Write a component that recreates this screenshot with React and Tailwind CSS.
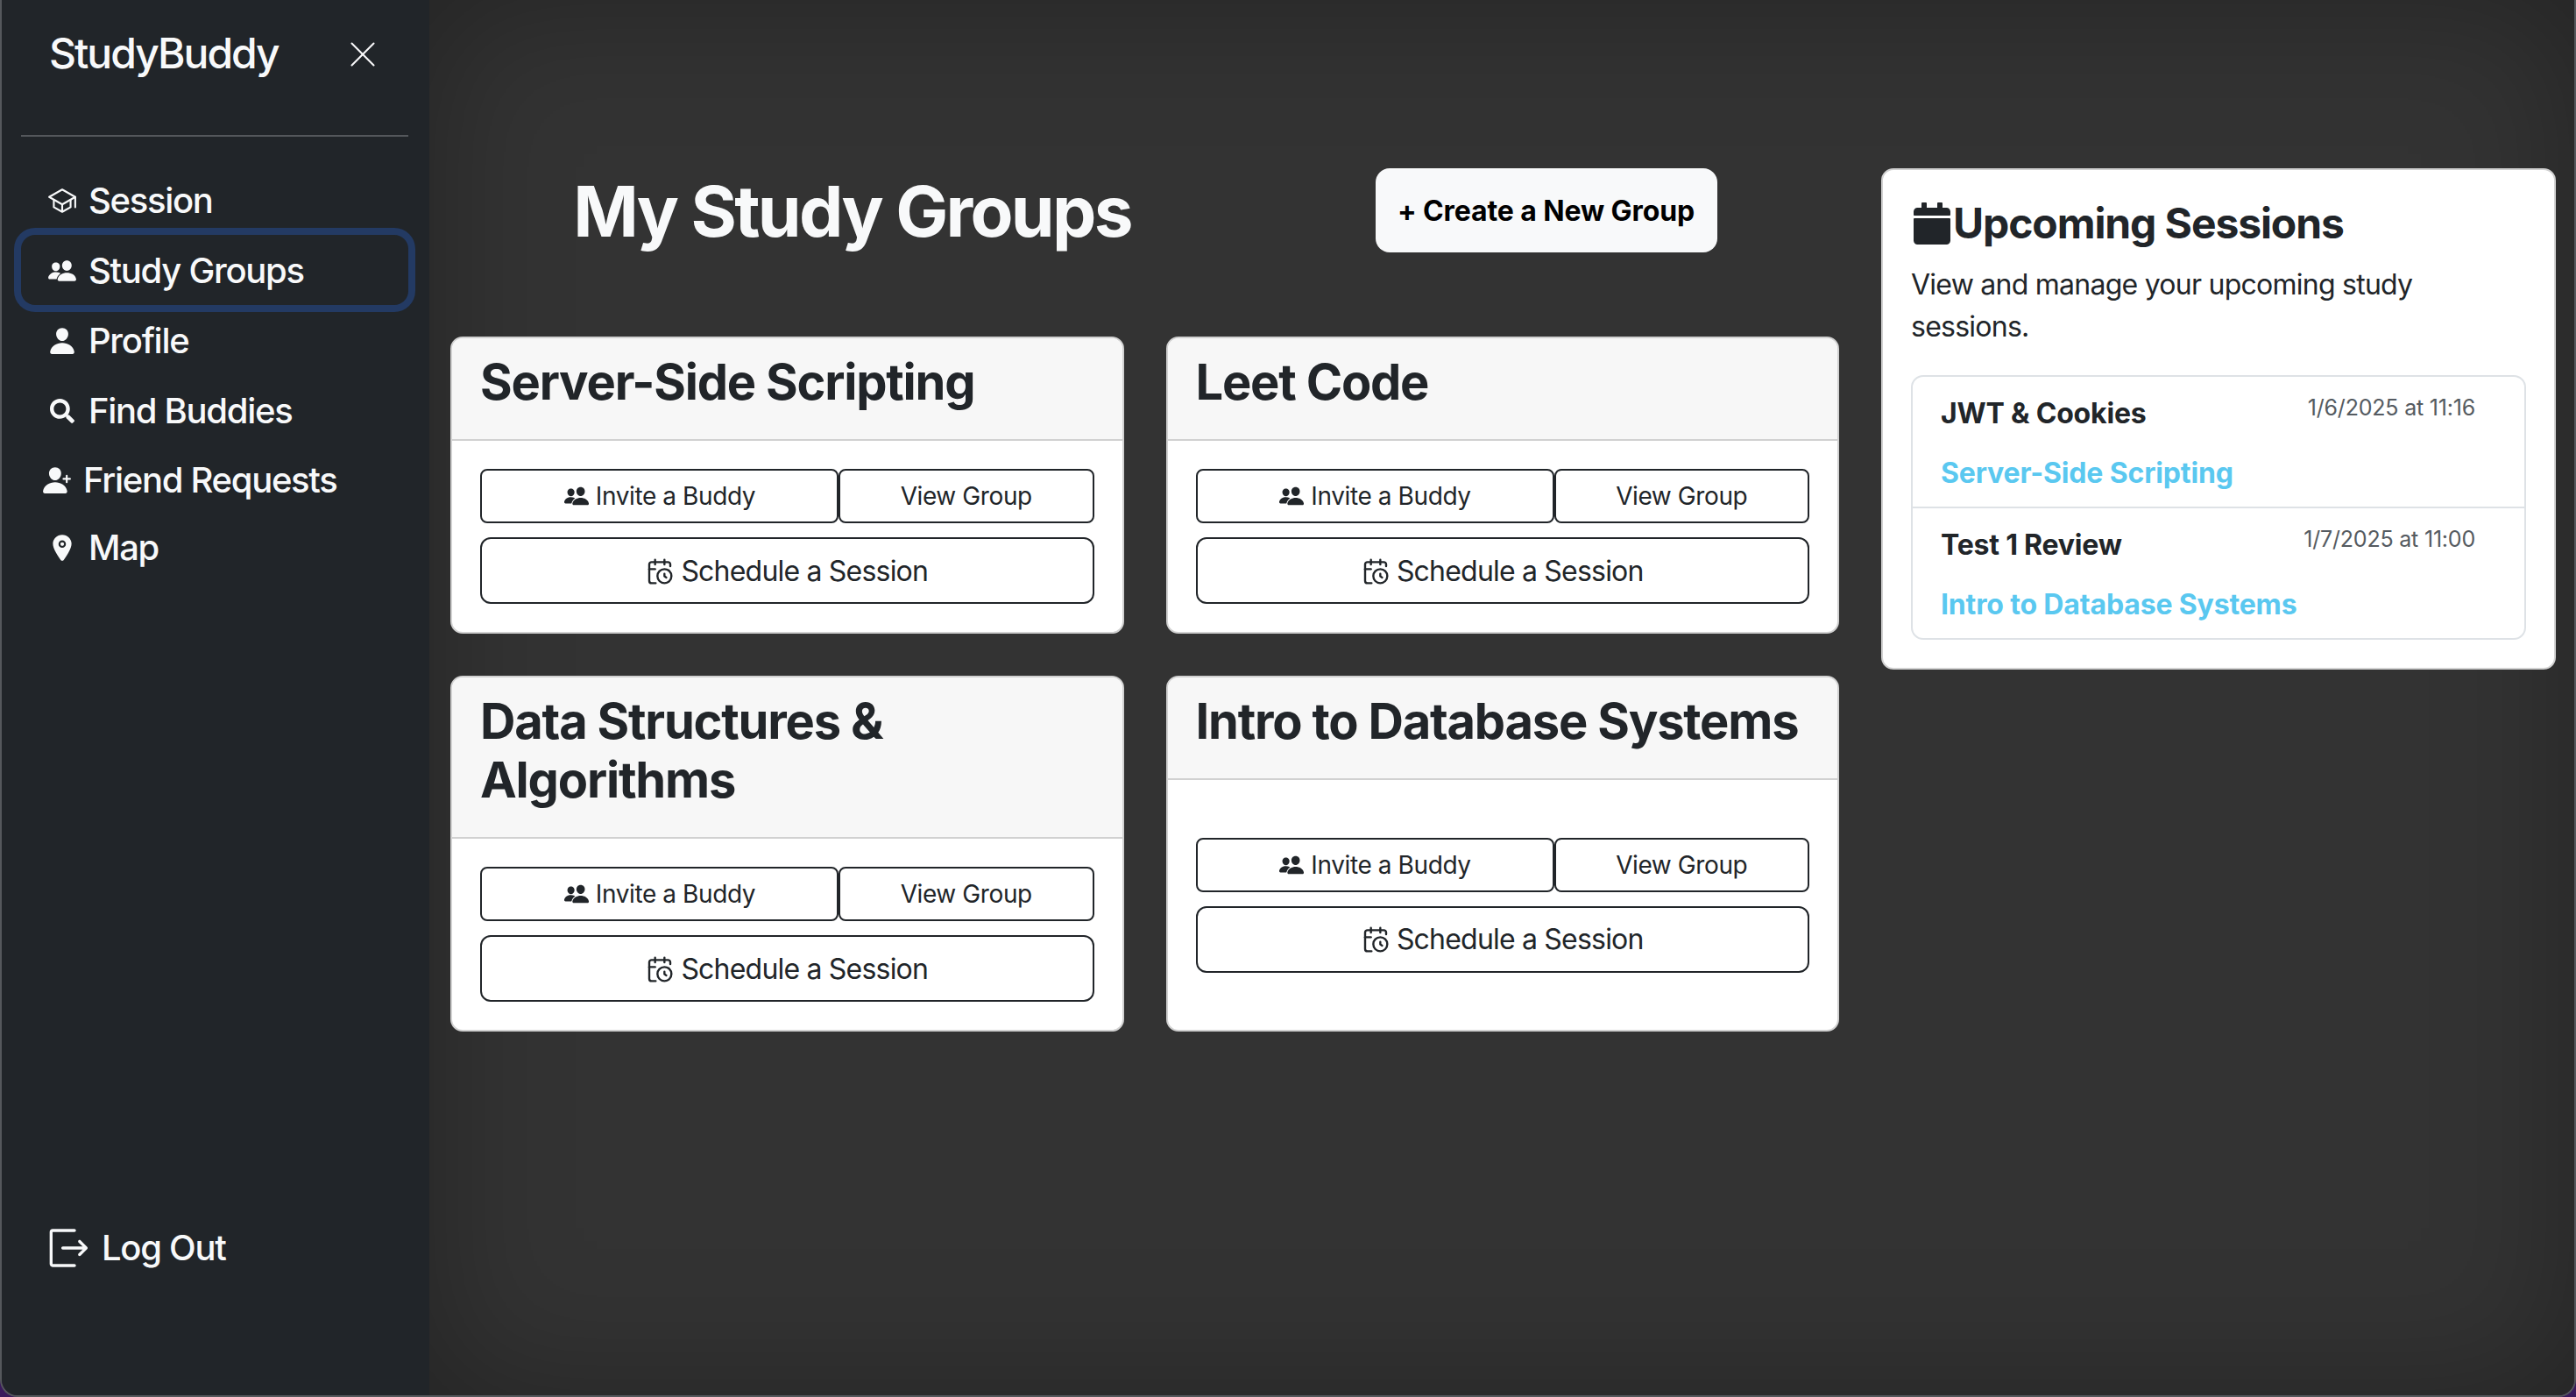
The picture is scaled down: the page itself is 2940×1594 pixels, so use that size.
import { X, CalendarClock } from 'lucide-react'
import { IoSchoolOutline, IoPeople, IoPerson, IoPersonAdd, IoLocation } from 'react-icons/io5'
import { FaCalendar, FaSearch } from 'react-icons/fa'
import { RxExit } from 'react-icons/rx'

const navItems = [
  { label: 'Session', icon: IoSchoolOutline, size: 34, box: 'h-20 pl-[30px] pt-[1px]' },
  { label: 'Study Groups', icon: IoPeople, size: 34, box: 'h-20 pl-[30px] pt-[1px] rounded-2xl ring-8 ring-[#233a63]' },
  { label: 'Profile', icon: IoPerson, size: 34, box: 'h-20 pl-[30px] pt-[1px]' },
  { label: 'Find Buddies', icon: FaSearch, size: 28, box: 'h-20 pl-[30px] pt-[1px]' },
  { label: 'Friend Requests', icon: IoPersonAdd, size: 34, iconClass: '-scale-x-100', box: 'h-[78px] pl-[24px] pt-[1px]' },
  { label: 'Map', icon: IoLocation, size: 34, box: 'h-[78px] pl-[30px]' },
]

const groups = [
  { name: 'Server-Side Scripting' },
  { name: 'Leet Code' },
  { name: 'Data Structures & Algorithms' },
  { name: 'Intro to Database Systems' },
]

const sessions = [
  { title: 'JWT & Cookies', date: '1/6/2025 at 11:16', group: 'Server-Side Scripting' },
  { title: 'Test 1 Review', date: '1/7/2025 at 11:00', group: 'Intro to Database Systems' },
]

function GroupCard({ name }) {
  return (
    <div className="flex flex-col bg-white border-2 border-[#d1d1d1] rounded-[14px] overflow-hidden text-[#212529]">
      <div className="bg-[#f7f7f7] border-b-2 border-[#d1d1d1] px-8 pt-[17px] pb-[31px]">
        <h3 className="text-[56px] leading-[67px] font-[650] tracking-[-1.2px]">{name}</h3>
      </div>
      <div className="flex-1 flex flex-col justify-center gap-4 p-8">
        <div className="flex">
          <button className="w-[409px] h-[62px] flex items-center justify-center gap-[7px] border-2 border-[#212529] rounded-lg text-[28px] tracking-[-0.4px]">
            <IoPeople size={30} />
            Invite a Buddy
          </button>
          <button className="flex-1 h-[62px] border-2 border-[#212529] rounded-lg text-[28px] tracking-[-0.4px]">
            View Group
          </button>
        </div>
        <button className="h-[76px] pt-[1px] flex items-center justify-center gap-2 border-2 border-[#212529] rounded-xl text-[32px] tracking-[-0.8px]">
          <CalendarClock size={32} strokeWidth={1.8} />
          Schedule a Session
        </button>
      </div>
    </div>
  )
}

export default function App() {
  return (
    <div className="min-h-[1594px] bg-[#3a1a5c] [font-family:Inter,sans-serif]">
      <div className="h-[1594px] flex overflow-hidden border-2 border-t-0 border-[#55585c] rounded-b-[20px]">

        {/* Sidebar */}
        <aside className="w-[488px] shrink-0 flex flex-col bg-[#212529] text-[#f8f9fa]">
          <div className="h-[154px] flex items-start pl-[54px] pt-[31px]">
            <span className="w-[333px] text-[48px] leading-[60px] font-[550] tracking-[-2px]">StudyBuddy</span>
            <X size={50} strokeWidth={1} className="mt-[6px]" />
          </div>
          <div className="ml-[22px] mr-[24px] h-[2px] bg-[#54575b]" />

          <nav className="ml-[22px] mr-[24px] mt-8 flex flex-col">
            {navItems.map(item => (
              <div key={item.label} className={`flex items-center gap-[13px] text-[40px] font-[550] tracking-[-1.3px] ${item.box}`}>
                <span className="w-[34px] flex justify-center shrink-0">
                  <item.icon size={item.size} className={item.iconClass} />
                </span>
                {item.label}
              </div>
            ))}
          </nav>

          <div className="mt-auto pb-[138px] pl-[48px] flex items-center gap-[16px] text-[40px] leading-[60px] font-[550] tracking-[-1.3px]">
            <RxExit size={50} />
            Log Out
          </div>
        </aside>

        {/* Main */}
        <main className="flex-1 flex items-start gap-[48px] pl-6 pr-[22px] pt-[192px] bg-[#333333] shadow-[inset_0_0_160px_rgba(0,0,0,0.3)]">
          <section className="w-[1585px]">
            <div className="grid grid-cols-2 ml-[62px] -mr-[63px] h-[192px] items-start">
              <h1 className="pt-[1px] text-center text-[80px] leading-[96px] font-[650] text-[#f8f9fa] tracking-[-2.7px]">
                My Study Groups
              </h1>
              <div className="flex justify-center pr-[2px]">
                <button className="w-[390px] h-[96px] pt-[1px] bg-[#f8f9fa] rounded-2xl text-[32px] font-[650] text-black tracking-[-0.1px]">
                  + Create a New Group
                </button>
              </div>
            </div>
            <div className="grid grid-cols-2 gap-x-[48px] gap-y-[48px]">
              {groups.map(g => <GroupCard key={g.name} name={g.name} />)}
            </div>
          </section>

          <section className="w-[770px] bg-white border-2 border-[#d1d1d1] rounded-[14px] p-8 text-[#212529]">
            <h4 className="flex items-center text-[48px] leading-[58px] font-[650] tracking-[-1.1px]">
              <FaCalendar size={48} />
              Upcoming Sessions
            </h4>
            <p className="mt-[17px] text-[32px] leading-[48px] tracking-[-0.75px]">View and manage your upcoming study sessions.</p>
            <div className="mt-[31px] border-2 border-[#dee2e6] rounded-[14px]">
              {sessions.map((s, i) => (
                <div key={s.title} className={`px-8 pt-[18px] pb-[14px] ${i > 0 ? 'border-t-2 border-[#dee2e6]' : ''}`}>
                  <div className="flex items-start justify-between pr-[24px]">
                    <span className="text-[32px] leading-[48px] font-[650] tracking-[-0.2px]">{s.title}</span>
                    <span className="-mt-[1px] text-[25px] leading-[36px] text-[#555b61] tracking-[-0.2px]">{s.date}</span>
                  </div>
                  <div className="mt-5 text-[32px] leading-[48px] font-[650] tracking-[-0.15px] text-[#5ac8f0]">{s.group}</div>
                </div>
              ))}
            </div>
          </section>
        </main>
      </div>
    </div>
  )
}
